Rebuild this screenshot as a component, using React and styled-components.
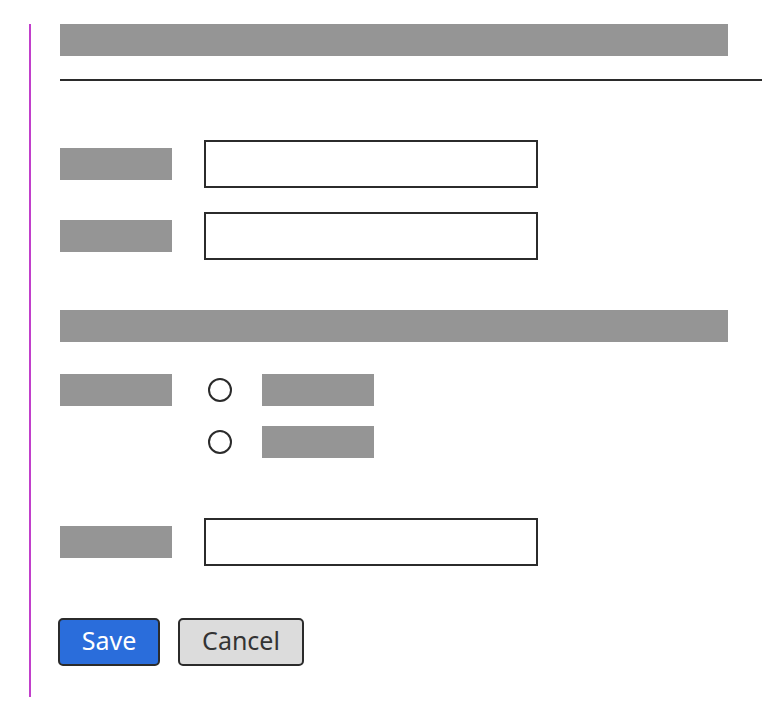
import styled, { createGlobalStyle } from "styled-components";

const GlobalStyle = createGlobalStyle`
  body {
    margin: 0;
    background: #ffffff;
    font-family: "Noto Sans", "Open Sans", sans-serif;
    overflow: hidden;
  }
`;

const Page = styled.div`
  padding: 24px 0 15px 29px;
`;

const Panel = styled.div`
  border-left: 2px solid #c13fcb;
  padding: 0 0 31px 29px;
  display: flex;
  flex-direction: column;
  width: 702px;
`;

const Bar = styled.div`
  width: 668px;
  height: 32px;
  background: #959595;
  margin-top: ${(p) => p.$top || 0}px;
`;

const Rule = styled.div`
  height: 2px;
  background: #2b2b2b;
  margin-top: 23px;
`;

const Row = styled.div`
  display: flex;
  align-items: ${(p) => (p.$top ? "flex-start" : "center")};
  gap: 32px;
  margin-top: ${(p) => p.$mt}px;
`;

const Label = styled.div`
  width: 112px;
  height: 32px;
  background: #959595;
  flex-shrink: 0;
`;

const Input = styled.div`
  width: 334px;
  height: 48px;
  box-sizing: border-box;
  border: 2px solid #2b2b2b;
  background: #fff;
`;

const RadioGroup = styled.div`
  display: flex;
  flex-direction: column;
  gap: 20px;
`;

const RadioOption = styled.div`
  display: flex;
  align-items: center;
  padding-left: 4px;
`;

const Circle = styled.div`
  width: 24px;
  height: 24px;
  box-sizing: border-box;
  border: 2px solid #2b2b2b;
  border-radius: 50%;
  margin-right: 30px;
`;

const OptionLabel = styled(Label)``;

const Buttons = styled.div`
  display: flex;
  gap: 18px;
  margin-top: 52px;
  margin-left: -2px;
`;

const Button = styled.button`
  height: 48px;
  box-sizing: border-box;
  border: 2px solid #2b2b2b;
  border-radius: 5px;
  padding: 0 0 4px;
  line-height: 1;
  font-family: "Noto Sans", "Open Sans", sans-serif;
  font-size: 25px;
  background: ${(p) => (p.$primary ? "#2a6ddb" : "#dcdcdc")};
  color: ${(p) => (p.$primary ? "#ffffff" : "#333333")};
  width: ${(p) => (p.$primary ? 102 : 126)}px;
`;

export default function App() {
  return (
    <>
      <GlobalStyle />
      <Page>
        <Panel>
          <Bar />
          <Rule />
          <Row $mt={59}>
            <Label />
            <Input />
          </Row>
          <Row $mt={24}>
            <Label />
            <Input />
          </Row>
          <Bar $top={50} />
          <Row $mt={32} $top>
            <Label />
            <RadioGroup>
              <RadioOption>
                <Circle />
                <OptionLabel />
              </RadioOption>
              <RadioOption>
                <Circle />
                <OptionLabel />
              </RadioOption>
            </RadioGroup>
          </Row>
          <Row $mt={60}>
            <Label />
            <Input />
          </Row>
          <Buttons>
            <Button $primary>Save</Button>
            <Button>Cancel</Button>
          </Buttons>
        </Panel>
      </Page>
    </>
  );
}
